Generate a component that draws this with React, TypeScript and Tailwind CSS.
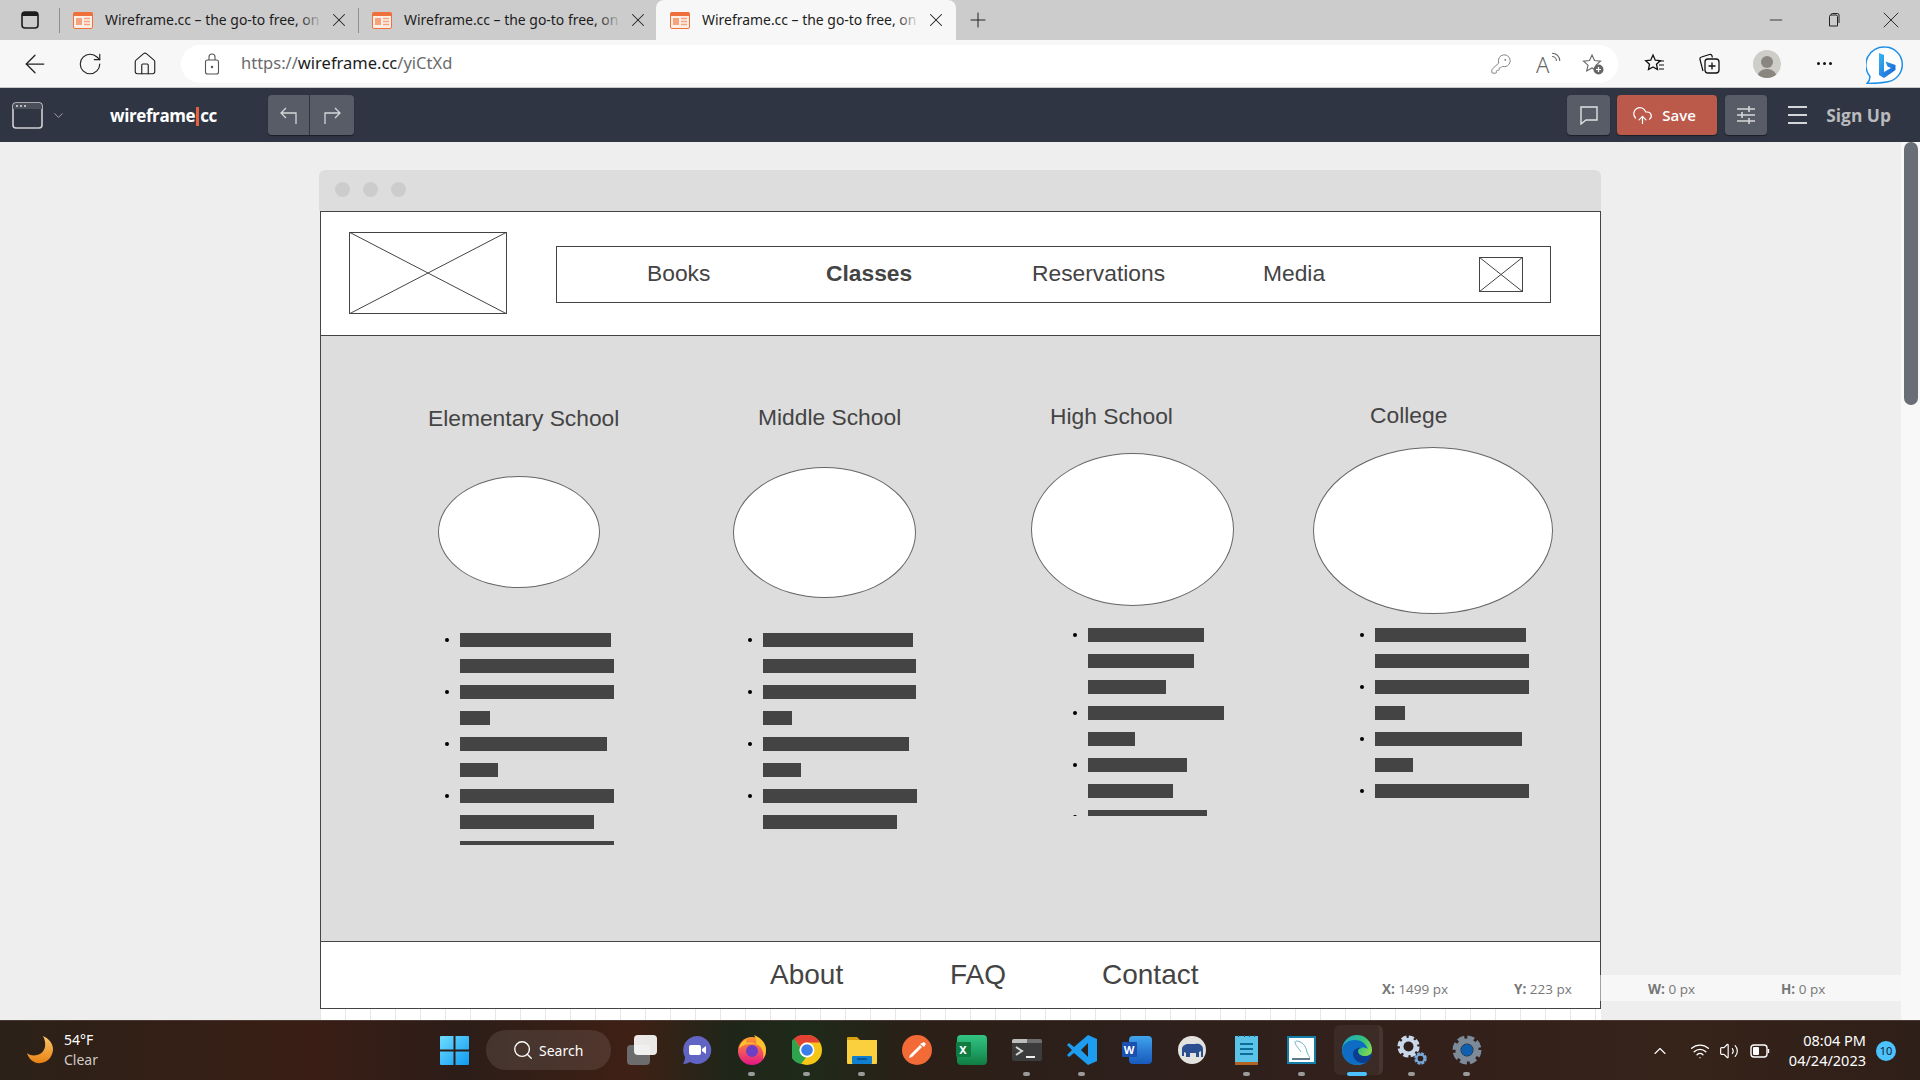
import { ArrowLeft, RotateCw, Home, KeyRound, ChevronDown, ChevronUp, CloudUpload, Search, Wifi, Volume2, Plus, X, Minus } from 'lucide-react';

const columns = [
  {
    title: 'Elementary School',
    colClass: 'w-[306px] pt-[68px]',
    titleClass: 'ml-[1px]',
    ellipseClass: 'ml-[11px] mt-[44px] w-[162px] h-[112px]',
    listClass: 'ml-[18px] mt-[45px] h-[212px]',
    rows: [[151, 1], [154, 0], [154, 1], [30, 0], [147, 1], [38, 0], [154, 1], [134, 0], [154, 0]],
  },
  {
    title: 'Middle School',
    colClass: 'w-[298px] pt-[67px]',
    titleClass: 'ml-[25px]',
    ellipseClass: 'mt-[36px] w-[183px] h-[131px]',
    listClass: 'ml-[15px] mt-[35px] h-[212px]',
    rows: [[150, 1], [153, 0], [153, 1], [29, 0], [146, 1], [38, 0], [154, 1], [134, 0]],
  },
  {
    title: 'High School',
    colClass: 'w-[282px] pt-[66px]',
    titleClass: 'ml-[19px]',
    ellipseClass: 'mt-[23px] w-[203px] h-[153px]',
    listClass: 'ml-[42px] mt-[22px] h-[188px]',
    rows: [[116, 1], [106, 0], [78, 0], [136, 1], [47, 0], [99, 1], [85, 0], [119, 1]],
  },
  {
    title: 'College',
    colClass: 'w-[240px] pt-[65px]',
    titleClass: 'ml-[57px]',
    ellipseClass: 'mt-[18px] w-[240px] h-[167px]',
    listClass: 'ml-[47px] mt-[14px] h-[188px]',
    rows: [[151, 1], [154, 0], [154, 1], [30, 0], [147, 1], [38, 0], [154, 1]],
  },
];

function CrossBox({ className }: { className: string }) {
  return (
    <svg className={className} viewBox="0 0 100 100" preserveAspectRatio="none">
      <rect x="0" y="0" width="100" height="100" fill="#fff" stroke="#444" strokeWidth="2" vectorEffect="non-scaling-stroke" />
      <path d="M0 0L100 100M100 0L0 100" stroke="#444" strokeWidth="1" vectorEffect="non-scaling-stroke" />
    </svg>
  );
}

function Favicon() {
  return (
    <svg width="20" height="17" viewBox="0 0 20 17" className="shrink-0">
      <rect x="0.5" y="0.5" width="19" height="16" rx="1.5" fill="#fdeee6" stroke="#f0703c" />
      <rect x="0.5" y="0.5" width="19" height="3.5" fill="#f0703c" />
      <rect x="3" y="6" width="6" height="7" fill="#f5a27f" />
      <path d="M11 6.500h6M11 9.500h6M11 12.500h6" stroke="#f5a27f" strokeWidth="1.4" />
    </svg>
  );
}

function Tab({ active }: { active?: boolean }) {
  return (
    <div className={active ? 'w-[300px] h-10 flex items-center pl-[14px] bg-[#f7f7f7] rounded-t-lg' : 'w-[298px] h-10 flex items-center pl-[13px]'}>
      <Favicon />
      <div className="relative ml-[12px] w-[218px] whitespace-nowrap text-[13.95px] leading-5 text-[#1c1c1c]">
        Wireframe.cc – the go-to free, on
        <div className={active ? 'absolute right-0 top-0 h-5 w-6 bg-gradient-to-r from-transparent to-[#f7f7f7]' : 'absolute right-0 top-0 h-5 w-6 bg-gradient-to-r from-transparent to-[#cccccc]'} />
      </div>
      <X className="ml-[5px] w-[22px] h-[22px] text-[#222]" strokeWidth={1.1} />
    </div>
  );
}

function TabStrip() {
  return (
    <div className="h-10 bg-[#cccccc] flex items-end shrink-0">
      <div className="w-[59px] h-10 flex items-center pl-[21px]">
        <svg width="18" height="18" viewBox="0 0 18 18">
          <rect x="1" y="1" width="16" height="16" rx="3" fill="none" stroke="#1c1c1c" strokeWidth="1.6" />
          <path d="M1 5h16V4a3 3 0 0 0-3-3H4a3 3 0 0 0-3 3z" fill="#1c1c1c" />
        </svg>
      </div>
      <div className="w-px h-[25px] mb-[7px] bg-[#8f8f8f]" />
      <Tab />
      <div className="w-px h-[25px] mb-[7px] bg-[#8f8f8f]" />
      <div className="w-[297px]">
        <Tab />
      </div>
      <Tab active />
      <div className="h-10 flex items-center ml-[10px]">
        <Plus className="w-[24px] h-[24px] text-[#222]" strokeWidth={1} />
      </div>
      <div className="ml-auto h-10 flex items-center">
        <Minus className="w-[20px] h-[20px] text-[#222] mr-[40px]" strokeWidth={1} />
        <svg width="14" height="14" viewBox="0 0 14 14" className="mr-[37px]">
          <path d="M3.500 13V3.500A1.500 1.500 0 0 1 5 2h5a1.500 1.500 0 0 1 1.500 1.500V13H3.500z M5 2a1.500 1.500 0 0 1 1.500-1.500h5A1.500 1.500 0 0 1 13 2v8" fill="none" stroke="#222" strokeWidth="1" />
        </svg>
        <X className="w-[28px] h-[28px] text-[#222] mr-[15px]" strokeWidth={0.8} />
      </div>
    </div>
  );
}

function BingIcon() {
  return (
    <svg width="38" height="38" viewBox="0 0 38 38">
      <defs>
        <linearGradient id="bingB" x1="0" y1="0" x2="1" y2="1">
          <stop offset="0" stopColor="#35b8f0" />
          <stop offset="1" stopColor="#1a5fd8" />
        </linearGradient>
      </defs>
      <path d="M19 1a17.500 17.500 0 0 1 3 34.700C15 37 7 37.500 1 37.500c2-2 3-4 3-7A18 18 0 0 1 19 1z" fill="#fff" stroke="#1d8fe8" strokeWidth="1.500" />
      <path d="M13 7l5 2v17l7-4-3.500-1.500-2-5 10 3.500v5L18 32l-5-3z" fill="url(#bingB)" />
    </svg>
  );
}

function AddressBar() {
  return (
    <div className="h-12 bg-[#f7f7f7] border-b border-[#c8c8c8] flex items-center shrink-0">
      <ArrowLeft className="ml-[20px] w-[30px] h-[30px] text-[#222]" strokeWidth={1} />
      <RotateCw className="ml-[27px] w-[26px] h-[26px] text-[#222]" strokeWidth={1.05} />
      <Home className="ml-[29px] w-[26px] h-[26px] text-[#222]" strokeWidth={1.05} />
      <div className="ml-[23px] w-[1437px] h-[38px] bg-white rounded-full flex items-center pl-[23px]">
        <svg width="16" height="22" viewBox="0 0 16 22">
          <rect x="1.500" y="7" width="13" height="14" rx="2" fill="none" stroke="#555" strokeWidth="1.1" />
          <path d="M5 7V4a3 3 0 0 1 6 0v3" fill="none" stroke="#555" strokeWidth="1.1" />
          <circle cx="8" cy="14" r="1.200" fill="#555" />
        </svg>
        <div className="ml-[21px] text-[16.5px] text-[#6b6b6b] whitespace-nowrap">
          https://<span className="text-[#1c1c1c]">wireframe.cc</span>/yiCtXd
        </div>
        <div className="ml-auto flex items-center mr-[14px]">
          <KeyRound className="w-[22px] h-[22px] text-[#777]" strokeWidth={1} />
          <div className="ml-[24px] relative w-[20px] h-[24px] text-[22px] leading-[24px] text-[#666] font-light">
            A
            <svg className="absolute -top-[1px] right-[-6px]" width="11" height="11" viewBox="0 0 10 10">
              <path d="M1 2a7 7 0 0 1 7 7M1 5a4 4 0 0 1 4 4" stroke="#666" fill="none" />
            </svg>
          </div>
          <svg className="ml-[26px]" width="22" height="22" viewBox="0 0 22 22">
            <path d="M10 2l2.500 5.500 6 .6-4.500 4 1.300 5.900L10 15l-5.300 3 1.300-5.900-4.500-4 6-.6z" fill="none" stroke="#666" strokeWidth="1.100" />
            <circle cx="16.500" cy="16.500" r="5" fill="#666" />
            <path d="M16.500 14v5M14 16.500h5" stroke="#fff" strokeWidth="1.200" />
          </svg>
        </div>
      </div>
      <svg className="ml-[26px]" width="22" height="22" viewBox="0 0 22 22">
        <path d="M9 2l2.300 5.200 5 .5-3.800 3.500 1 5.300L9 14l-4.500 2.500 1-5.300L1.700 7.700l5-.5z" fill="none" stroke="#111" strokeWidth="1.300" />
        <path d="M14 8h6M15 12h5M15 16h5" stroke="#111" strokeWidth="1.100" />
      </svg>
      <svg className="ml-[32px]" width="22" height="24" viewBox="0 0 22 24">
        <path d="M5 19L2 7.500A2 2 0 0 1 3.500 5l8-2.500a2 2 0 0 1 2.500 1.300l.4 1.700" fill="none" stroke="#111" strokeWidth="1.200" />
        <rect x="7" y="7" width="14" height="14" rx="3" fill="#f7f7f7" stroke="#111" strokeWidth="1.300" />
        <path d="M14 10.500v7M10.500 14h7" stroke="#111" strokeWidth="1.300" />
      </svg>
      <div className="ml-[33px] w-[28px] h-[28px] rounded-full bg-[#cfcdc8] flex flex-col items-center justify-end overflow-hidden">
        <div className="w-[12px] h-[12px] rounded-full bg-[#8a867f] mb-[1px]" />
        <div className="w-[20px] h-[9px] rounded-t-full bg-[#8a867f]" />
      </div>
      <div className="ml-[36px] flex gap-[3px]">
        <div className="w-[3px] h-[3px] rounded-full bg-[#111]" />
        <div className="w-[3px] h-[3px] rounded-full bg-[#111]" />
        <div className="w-[3px] h-[3px] rounded-full bg-[#111]" />
      </div>
      <div className="ml-[34px] mt-[3px]">
        <BingIcon />
      </div>
    </div>
  );
}

function Toolbar() {
  return (
    <div className="h-[54px] bg-[#2f3542] flex items-center shrink-0 font-['Open_Sans',sans-serif]">
      <svg className="ml-[12px]" width="31" height="27" viewBox="0 0 31 27">
        <rect x="1" y="1" width="29" height="25" rx="3" fill="none" stroke="#cfd0d3" strokeWidth="1.600" />
        <path d="M1 7h29V4a3 3 0 0 0-3-3H4a3 3 0 0 0-3 3z" fill="#4a4f5a" />
        <path d="M4 4h2M8 4h2M12 4h2" stroke="#dfe0e3" strokeWidth="1.500" />
      </svg>
      <ChevronDown className="ml-[8px] w-[15px] h-[15px] text-[#c4c5c9]" strokeWidth={1.2} />
      <div className="ml-[44px] w-[158px] pt-[1px] text-[17px] font-bold tracking-[-0.4px] text-white whitespace-nowrap">
        wireframe<span className="inline-block w-[3px] h-[19px] mx-[1px] align-[-4px] bg-[#e5603f]" />cc
      </div>
      <div className="flex h-10 rounded overflow-hidden shadow-[0_1px_1px_#1b1f27]">
        <div className="w-[42px] bg-[#585c66] border-r border-[#2f3542] flex items-center justify-center">
          <svg width="20" height="20" viewBox="0 0 20 20">
            <path d="M7 3L2 8l5 5M2 8h15v11" fill="none" stroke="#d5d6d9" strokeWidth="1.300" />
          </svg>
        </div>
        <div className="w-[44px] bg-[#585c66] flex items-center justify-center">
          <svg width="20" height="20" viewBox="0 0 20 20">
            <path d="M13 3l5 5-5 5M18 8H3v11" fill="none" stroke="#d5d6d9" strokeWidth="1.300" />
          </svg>
        </div>
      </div>
      <div className="ml-auto w-[43px] h-10 rounded bg-[#585c66] flex items-center justify-center shadow-[0_1px_1px_#1b1f27]">
        <svg width="20" height="20" viewBox="0 0 20 20">
          <path d="M2 2h16v13H7l-5 4z" fill="none" stroke="#e0e1e3" strokeWidth="1.400" />
        </svg>
      </div>
      <div className="ml-[7px] w-[100px] h-10 rounded bg-[#bb5a4b] flex items-center pl-[15px] text-white text-[15px] font-semibold shadow-[0_1px_1px_#1b1f27]">
        <CloudUpload className="w-[21px] h-[21px] mr-[9px]" strokeWidth={1.4} />
        Save
      </div>
      <div className="ml-[8px] w-[42px] h-10 rounded bg-[#585c66] flex items-center justify-center shadow-[0_1px_1px_#1b1f27]">
        <svg width="20" height="20" viewBox="0 0 20 20">
          <path d="M1 4h18M1 10h18M1 16h18" stroke="#d5d6d9" strokeWidth="1.600" />
          <path d="M13 1v6M6 7v6M13 13v6" stroke="#d5d6d9" strokeWidth="1.600" />
        </svg>
      </div>
      <div className="ml-[21px] w-[19px] flex flex-col gap-[6px]">
        <div className="h-[2px] bg-[#d5d6d9]" />
        <div className="h-[2px] bg-[#d5d6d9]" />
        <div className="h-[2px] bg-[#d5d6d9]" />
      </div>
      <div className="ml-[19px] mr-[29px] text-[#b9babd] text-[17.4px] font-bold whitespace-nowrap">Sign Up</div>
    </div>
  );
}

function BarList({ rows, className }: { rows: number[][]; className: string }) {
  return (
    <div className={'overflow-hidden flex flex-col gap-[12px] ' + className}>
      {rows.map(([w, bullet], i) => (
        <div key={i} className="flex items-center shrink-0 h-[14px]">
          <div className="w-[15px] shrink-0">
            {bullet === 1 && <div className="w-[4px] h-[4px] rounded-full bg-black" />}
          </div>
          <div className="h-[14px] bg-[#444444]" style={{ width: w }} />
        </div>
      ))}
    </div>
  );
}

function Wireframe() {
  return (
    <div className="w-[1282px] font-['Liberation_Sans',sans-serif] text-[#444444]">
      <div className="h-[41px] rounded-t-md bg-[#dddddd] flex items-center pl-[16px] pb-[2px] gap-[13px]">
        <div className="w-[15px] h-[15px] rounded-full bg-[#cccccc]" />
        <div className="w-[15px] h-[15px] rounded-full bg-[#cccccc]" />
        <div className="w-[15px] h-[15px] rounded-full bg-[#cccccc]" />
      </div>
      <div className="ml-[1px] border border-[#444444] bg-white">
        <div className="h-[124px] border-b border-[#444444] flex items-center pl-[28px]">
          <CrossBox className="w-[158px] h-[82px] mb-[1px]" />
          <div className="ml-[49px] w-[995px] h-[57px] mt-[2px] border border-[#444444] flex items-center pl-[90px] pb-[2px] text-[22.8px]">
            <div className="w-[179px]">Books</div>
            <div className="w-[206px] font-bold">Classes</div>
            <div className="w-[231px]">Reservations</div>
            <div className="w-[216px]">Media</div>
            <CrossBox className="w-[44px] h-[35px] mt-[2px]" />
          </div>
        </div>
        <div className="h-[606px] bg-[#dddddd] border-b border-[#444444] flex pl-[106px] text-[22.8px]">
          {columns.map((c) => (
            <div key={c.title} className={'shrink-0 ' + c.colClass}>
              <div className={'leading-[28px] whitespace-nowrap ' + c.titleClass}>{c.title}</div>
              <div className={'rounded-[50%] bg-white border border-[#666666] ' + c.ellipseClass} />
              <BarList rows={c.rows} className={c.listClass} />
            </div>
          ))}
        </div>
        <div className="h-[66px] flex items-center pl-[449px] pb-[1px] text-[28px]">
          <div className="w-[180px]">About</div>
          <div className="w-[152px]">FAQ</div>
          <div>Contact</div>
        </div>
      </div>
      <div className="ml-[1px] h-[14px] bg-white bg-[repeating-linear-gradient(90deg,#e6e6e6_0,#e6e6e6_1px,transparent_1px,transparent_25px)]" />
    </div>
  );
}

function StatusStrip() {
  const cells = [
    ['X:', '1499 px', 'w-[132px]'],
    ['Y:', '223 px', 'w-[134px]'],
    ['W:', '0 px', 'w-[133px]'],
    ['H:', '0 px', 'w-[120px]'],
  ];
  return (
    <div className="absolute bottom-[19px] right-[19px] w-[541px] h-[26px] pl-[22px] pt-[2px] flex items-center bg-white/50 text-[13.5px] text-[#777] font-['Open_Sans',sans-serif]">
      {cells.map(([k, v, w]) => (
        <div key={k} className={w}>
          <span className="font-bold">{k}</span> {v}
        </div>
      ))}
    </div>
  );
}

function Content() {
  return (
    <div className="flex-1 relative flex min-h-0">
      <div className="flex-1 bg-[#eeeeee] pl-[319px] pt-[28px] overflow-hidden">
        <Wireframe />
      </div>
      <div className="w-[19px] bg-[#f8f8f8] pl-[3px] shrink-0">
        <div className="w-[14px] h-[263px] rounded-full bg-[#696d75]" />
      </div>
      <StatusStrip />
    </div>
  );
}

function Dot({ active }: { active?: boolean }) {
  return <div className={active ? 'w-[20px] h-[4px] rounded-full bg-[#4cc2ff]' : 'w-[7px] h-[4px] rounded-full bg-[#9a9a9a]'} />;
}

function Slot({ children, dot, active }: { children: React.ReactNode; dot?: boolean; active?: boolean }) {
  return (
    <div className="w-[55px] h-[59px] flex justify-center relative">
      {active && <div className="absolute top-[4px] left-[5px] w-[49px] h-[50px] rounded-md bg-white/5 border-r-4 border-white/5" />}
      <div className="relative flex flex-col items-center pt-[14px]">
        <div className="w-[30px] h-[30px] flex items-center justify-center">{children}</div>
        <div className="h-[4px] mt-[7px] flex justify-center">{dot && <Dot active={active} />}</div>
      </div>
    </div>
  );
}

function Gear({ color, hub, size }: { color: string; hub: string; size: number }) {
  return (
    <svg width={size} height={size} viewBox="0 0 30 30">
      <circle cx="15" cy="15" r="12" fill="none" stroke={color} strokeWidth="5" strokeDasharray="6.600 2.820" />
      <circle cx="15" cy="15" r="9" fill="none" stroke={color} strokeWidth="5" />
      <circle cx="15" cy="15" r="6" fill={hub} />
    </svg>
  );
}

function Taskbar() {
  return (
    <div className="h-[60px] shrink-0 flex items-start border-t border-[#4a3a33] text-white font-['Noto_Sans',sans-serif] bg-[linear-gradient(90deg,#2b2118_0%,#3a1e15_16%,#2c1d18_24%,#3f2015_33%,#1f2619_38%,#1e2a1a_42%,#2b1f17_48%,#2e201c_60%,#33201a_75%,#36231a_88%,#2e1f18_100%)]">
      <div className="w-[440px] h-[59px] flex items-center shrink-0 pl-[26px] pb-[2px]">
        <svg width="28" height="29" viewBox="0 0 28 29">
          <defs>
            <linearGradient id="moon" x1="0" y1="0" x2="0" y2="1">
              <stop offset="0" stopColor="#fbc66b" />
              <stop offset="1" stopColor="#e98213" />
            </linearGradient>
          </defs>
          <path d="M17 1c4 7 3 17-6 19-4 1-8 0-10-2 2 7 8 11 14 10 8-1 12-8 12-14S22 3 17 1z" fill="url(#moon)" />
        </svg>
        <div className="ml-[10px] text-[14px] leading-[20px]">
          <div>54°F</div>
          <div className="text-[#cfcac6]">Clear</div>
        </div>
      </div>
      <div className="w-[46px] h-[59px] flex items-center shrink-0">
        <svg width="29" height="29" viewBox="0 0 29 29">
          <defs>
            <linearGradient id="win" x1="0" y1="0" x2="1" y2="1">
              <stop offset="0" stopColor="#6fdcff" />
              <stop offset="1" stopColor="#0f9af0" />
            </linearGradient>
          </defs>
          <path d="M0 1a1 1 0 0 1 1-1h12.500v13.500H0zM15.500 0H28a1 1 0 0 1 1 1v12.500H15.500zM0 15.500h13.500V29H1a1 1 0 0 1-1-1zM15.500 15.500H29V28a1 1 0 0 1-1 1H15.500z" fill="url(#win)" />
        </svg>
      </div>
      <div className="mt-[9px] w-[125px] h-[40px] rounded-full bg-white/10 flex items-center pl-[26px] text-[14px] shrink-0">
        <Search className="w-[22px] h-[22px] mr-[5px]" strokeWidth={1.5} />
        Search
      </div>
      <div className="w-[3px] shrink-0" />
      <Slot>
        <div className="relative w-[30px] h-[30px]">
          <div className="absolute left-0 bottom-0 w-[23px] h-[20px] rounded-sm bg-[#6c6c6c]" />
          <div className="absolute right-0 top-0 w-[23px] h-[20px] rounded-sm bg-white/90" />
        </div>
      </Slot>
      <Slot>
        <svg width="30" height="30" viewBox="0 0 30 30">
          <path d="M15 1a14 14 0 1 1-7 26c-2 1-4 2-7 2 1-2 2-4 2-7A14 14 0 0 1 15 1z" fill="#6264c4" />
          <rect x="7" y="10" width="12" height="10" rx="2" fill="#fff" />
          <path d="M20 14l4-3v8l-4-3z" fill="#fff" />
        </svg>
      </Slot>
      <Slot dot>
        <svg width="30" height="30" viewBox="0 0 30 30">
          <defs>
            <linearGradient id="fox" x1="0" y1="0" x2="0" y2="1">
              <stop offset="0" stopColor="#ff9a2e" />
              <stop offset="1" stopColor="#e31587" />
            </linearGradient>
          </defs>
          <circle cx="15" cy="16" r="14" fill="url(#fox)" />
          <path d="M2 14C3 8 7 5 10 4c-1 2-1 3 0 4 4-1 7 0 9 1 1-3 0-6-2-9 7 3 12 8 12 15a14 14 0 0 1-3 9C28 14 22 8 15 9 8 9 4 11 2 14z" fill="#ffc22e" />
          <circle cx="15" cy="16" r="6" fill="#6d3fc4" />
        </svg>
      </Slot>
      <Slot dot>
        <svg width="30" height="30" viewBox="0 0 30 30">
          <circle cx="15" cy="15" r="15" fill="#f5c518" />
          <path d="M15 0a15 15 0 0 1 13 7.500H15a7.500 7.500 0 0 0-7 5L2 3.500A15 15 0 0 1 15 0z" fill="#e34133" />
          <path d="M2 3.500l6 9A7.500 7.500 0 0 0 14 22.400L9 29A15 15 0 0 1 2 3.500z" fill="#2ea44f" />
          <circle cx="15" cy="15" r="7.500" fill="#fff" />
          <circle cx="15" cy="15" r="5.800" fill="#3b7de9" />
        </svg>
      </Slot>
      <Slot dot>
        <svg width="30" height="28" viewBox="0 0 30 28">
          <path d="M0 2a1 1 0 0 1 1-1h9l3 3h-13z" fill="#d9a010" />
          <path d="M0 4h30v23a1 1 0 0 1-1 1H1a1 1 0 0 1-1-1z" fill="#fad03f" />
          <rect x="5" y="20" width="20" height="8" rx="1" fill="#0f7fd0" />
          <path d="M10 23h10" stroke="#063f6d" strokeWidth="1.200" />
        </svg>
      </Slot>
      <Slot>
        <svg width="30" height="30" viewBox="0 0 30 30">
          <circle cx="15" cy="15" r="15" fill="#f26a35" />
          <path d="M7 23l3-1 10-10-2-2L8 20zM18 9l4-2 2 2-2 3z" fill="#fff" />
        </svg>
      </Slot>
      <Slot>
        <div className="relative w-[30px] h-[30px] bg-[linear-gradient(180deg,#33c481_0%,#21a366_50%,#107c41_100%)] rounded-sm">
          <div className="absolute left-0 top-[7px] w-[15px] h-[15px] bg-[#107c41] text-white text-[11px] font-bold leading-[15px] text-center rounded-[1px] -ml-[1px]">X</div>
        </div>
      </Slot>
      <Slot dot>
        <svg width="30" height="22" viewBox="0 0 30 22">
          <rect width="30" height="22" rx="2" fill="#3c3c3c" />
          <path d="M0 2a2 2 0 0 1 2-2h13v4H0z" fill="#bdbdbd" />
          <path d="M15 0h13a2 2 0 0 1 2 2v2H15z" fill="#6e6e6e" />
          <path d="M4 8l6 4-6 4" fill="none" stroke="#d6d6d6" strokeWidth="2" />
          <path d="M14 18h9" stroke="#eee" strokeWidth="2" />
        </svg>
      </Slot>
      <Slot dot>
        <svg width="30" height="30" viewBox="0 0 30 30">
          <path d="M21 0l9 4v22l-9 4L7 18l-5 4-2-2 5-5-5-5 2-2 5 4z" fill="#1d9cf0" />
          <path d="M21 8l-7 7 7 7z" fill="#2b2118" />
        </svg>
      </Slot>
      <Slot>
        <div className="relative w-[30px] h-[28px]">
          <div className="absolute right-0 top-0 w-[23px] h-[28px] rounded-sm bg-[linear-gradient(180deg,#41a5ee_0%,#2b7cd3_50%,#185abd_100%)]" />
          <div className="absolute left-0 top-[6px] w-[15px] h-[15px] bg-[#1b50b0] text-white text-[11px] font-bold leading-[15px] text-center rounded-[1px]">W</div>
        </div>
      </Slot>
      <Slot>
        <svg width="28" height="28" viewBox="0 0 28 28">
          <circle cx="14" cy="14" r="14" fill="#e4e2de" />
          <path d="M4 20v-7c0-3 3-5 7-5h6c4-1 8 1 8 5v8h-2v-6l-2 1v5h-3v-4h-6v4H8v-4l-2-1v4z" fill="#2c4f91" />
        </svg>
      </Slot>
      <Slot dot>
        <svg width="23" height="30" viewBox="0 0 23 30">
          <rect y="1" width="23" height="27" fill="#5cc3e8" />
          <rect y="27" width="23" height="3" fill="#b2631f" />
          <path d="M3 1h1M9 1h1M14 1h1M19 1h1" stroke="#0b5f85" strokeWidth="2" />
          <path d="M5 9h13M5 14h13M5 19h13" stroke="#0e6d97" strokeWidth="2" />
        </svg>
      </Slot>
      <Slot dot>
        <svg width="29" height="28" viewBox="0 0 29 28">
          <rect x="1" y="1" width="27" height="26" fill="#fff" stroke="#137fa8" strokeWidth="2" />
          <path d="M9 5c6 0 10 5 11 11 1 3 2 4 3 6M8 5c0 5 4 7 6 11" fill="none" stroke="#6fb2cc" />
          <path d="M5 23h18" stroke="#5b7a8a" strokeWidth="2" />
        </svg>
      </Slot>
      <Slot dot active>
        <svg width="30" height="30" viewBox="0 0 30 30">
          <defs>
            <linearGradient id="edgeA" x1="0" y1="0" x2="1" y2="0.600">
              <stop offset="0" stopColor="#1aa6d8" />
              <stop offset="0.600" stopColor="#34c27a" />
              <stop offset="1" stopColor="#8fdc4a" />
            </linearGradient>
          </defs>
          <circle cx="15" cy="15" r="15" fill="url(#edgeA)" />
          <path d="M0 15C1 8 7 5 13 5c7 0 11 4 13 9-3-2-8-2-11 0-3 3-2 8 1 11 3 2 7 3 10 1-3 3-7 4-11 4C6 30 0 23 0 15z" fill="#0f6cc4" />
          <path d="M30 17c-1 2-3 4-7 4-4 0-7-2-7-5 0-2 2-3 4-3-5-1-9 2-9 6 0 5 5 9 10 9 5 0 9-5 9-11z" fill="#0b3d91" />
        </svg>
      </Slot>
      <Slot dot>
        <div className="relative w-[30px] h-[30px]">
          <div className="absolute left-0 top-0">
            <Gear color="#c8d8ea" hub="#2e201c" size={23} />
          </div>
          <div className="absolute right-0 bottom-0">
            <Gear color="#7aa7d8" hub="#2e201c" size={13} />
          </div>
        </div>
      </Slot>
      <Slot dot>
        <Gear color="#7d8a99" hub="#0f5fae" size={30} />
      </Slot>
      <div className="flex-1 h-[59px] flex items-center pl-[156px]">
        <ChevronUp className="w-[20px] h-[20px] text-white" strokeWidth={1.3} />
        <Wifi className="ml-[20px] w-[20px] h-[20px]" strokeWidth={1.6} />
        <Volume2 className="ml-[9px] w-[20px] h-[20px]" strokeWidth={1.4} />
        <svg className="ml-[11px]" width="20" height="14" viewBox="0 0 20 14">
          <rect x="1" y="1" width="16" height="12" rx="3" fill="none" stroke="#fff" strokeWidth="1.400" />
          <rect x="3" y="3" width="6" height="8" rx="1" fill="#fff" />
          <path d="M18.500 5v4" stroke="#fff" strokeWidth="1.400" />
        </svg>
        <div className="ml-auto pb-[2px] text-right text-[14.5px] leading-[20px] whitespace-nowrap">
          <div>08:04 PM</div>
          <div>04/24/2023</div>
        </div>
        <div className="ml-[10px] mr-[24px] w-[20px] h-[20px] rounded-full bg-[#4cc2ff] text-[#102030] text-[11px] leading-[20px] text-center">10</div>
      </div>
    </div>
  );
}

export default function App() {
  return (
    <div className="w-screen h-screen overflow-hidden flex flex-col font-['Noto_Sans',sans-serif]">
      <TabStrip />
      <AddressBar />
      <Toolbar />
      <Content />
      <Taskbar />
    </div>
  );
}
